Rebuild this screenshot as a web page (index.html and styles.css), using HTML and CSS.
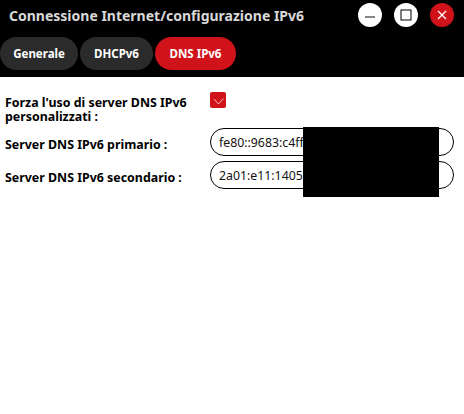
FILE: index.html
```html
<!DOCTYPE html>
<html lang="it">
<head>
    <meta charset="UTF-8">
    <title>Connessione Internet/configurazione IPv6</title>
    <link rel="stylesheet" href="styles.css">
</head>
<body>
    <div class="window">
        <div class="top">
            <div class="title-bar">
                <div class="title">Connessione Internet/configurazione IPv6</div>
                <div class="win-buttons">
                    <button class="win-btn">
                        <svg width="12" height="12" viewBox="0 0 12 12"><path d="M1 8h10" stroke="#666" stroke-width="1.6"/></svg>
                    </button>
                    <button class="win-btn">
                        <svg width="12" height="12" viewBox="0 0 12 12"><rect x="1" y="1" width="10" height="10" fill="none" stroke="#000" stroke-width="1"/></svg>
                    </button>
                    <button class="win-btn close">
                        <svg width="12" height="12" viewBox="0 0 12 12"><path d="M2 2l8 8M10 2l-8 8" stroke="#fff" stroke-width="1.3"/></svg>
                    </button>
                </div>
            </div>
            <div class="tabs">
                <button class="tab tab-general">Generale</button>
                <button class="tab tab-dhcp">DHCPv6</button>
                <button class="tab tab-dns active">DNS IPv6</button>
            </div>
        </div>

        <div class="content">
            <div class="form-row row-check">
                <label>Forza l'uso di server DNS IPv6 personalizzati :</label>
                <span class="checkbox">
                    <svg width="16" height="16" viewBox="0 0 16 16"><path d="M4 6l4.5 5 5-5.5" fill="none" stroke="#fff" stroke-width="0.7"/></svg>
                </span>
            </div>
            <div class="form-row">
                <label>Server DNS IPv6 primario :</label>
                <input type="text" value="fe80::9683:c4ff:">
            </div>
            <div class="form-row">
                <label>Server DNS IPv6 secondario :</label>
                <input type="text" value="2a01:e11:1405:">
            </div>
            <div class="redacted"></div>
        </div>
    </div>
</body>
</html>
```

FILE: styles.css
```css
* {
    margin: 0;
    padding: 0;
    box-sizing: border-box;
    font-family: "Noto Sans", Tahoma, sans-serif;
}

body {
    background-color: white;
}

.window {
    width: 464px;
    height: 414px;
}

.top {
    background-color: black;
    height: 77px;
    padding-top: 3px;
}

.title-bar {
    display: flex;
    justify-content: space-between;
    align-items: center;
    height: 24px;
    padding: 0 10px 0 9px;
}

.title {
    color: #d8d8d8;
    font-size: 14px;
    font-weight: bold;
}

.win-buttons {
    display: flex;
    gap: 12px;
}

.win-btn {
    width: 24px;
    height: 24px;
    border: none;
    border-radius: 50%;
    background-color: white;
    display: flex;
    justify-content: center;
    align-items: center;
}

.win-btn.close {
    background-color: #d0121b;
}

.tabs {
    display: flex;
    gap: 2px;
    margin-top: 10px;
}

.tab {
    height: 33px;
    border: none;
    border-radius: 17px;
    background-color: #2b2b2b;
    color: white;
    font-size: 11.5px;
    font-weight: bold;
}

.tab-general {
    width: 78px;
}

.tab-dhcp {
    width: 73px;
}

.tab-dns {
    width: 81px;
}

.tab.active {
    background-color: #d0121b;
}

.content {
    position: relative;
    padding: 15px 10px 0 5px;
}

.form-row {
    display: flex;
    align-items: center;
    margin-bottom: 5px;
}

.form-row label {
    width: 205px;
    padding-top: 4px;
    font-size: 12.4px;
    line-height: 15px;
    font-weight: bold;
    color: black;
}

.row-check {
    align-items: flex-start;
    height: 31px;
}

.row-check label {
    line-height: 14px;
}

.checkbox {
    width: 16px;
    height: 16px;
    background-color: #d0121b;
    border-radius: 2px;
}

.form-row input {
    width: 244px;
    height: 28px;
    padding: 0 8px;
    border: 1px solid black;
    border-radius: 14px;
    font-size: 12.3px;
    color: #111;
}

.redacted {
    position: absolute;
    left: 303px;
    top: 50px;
    width: 136px;
    height: 70px;
    background-color: black;
}
```
